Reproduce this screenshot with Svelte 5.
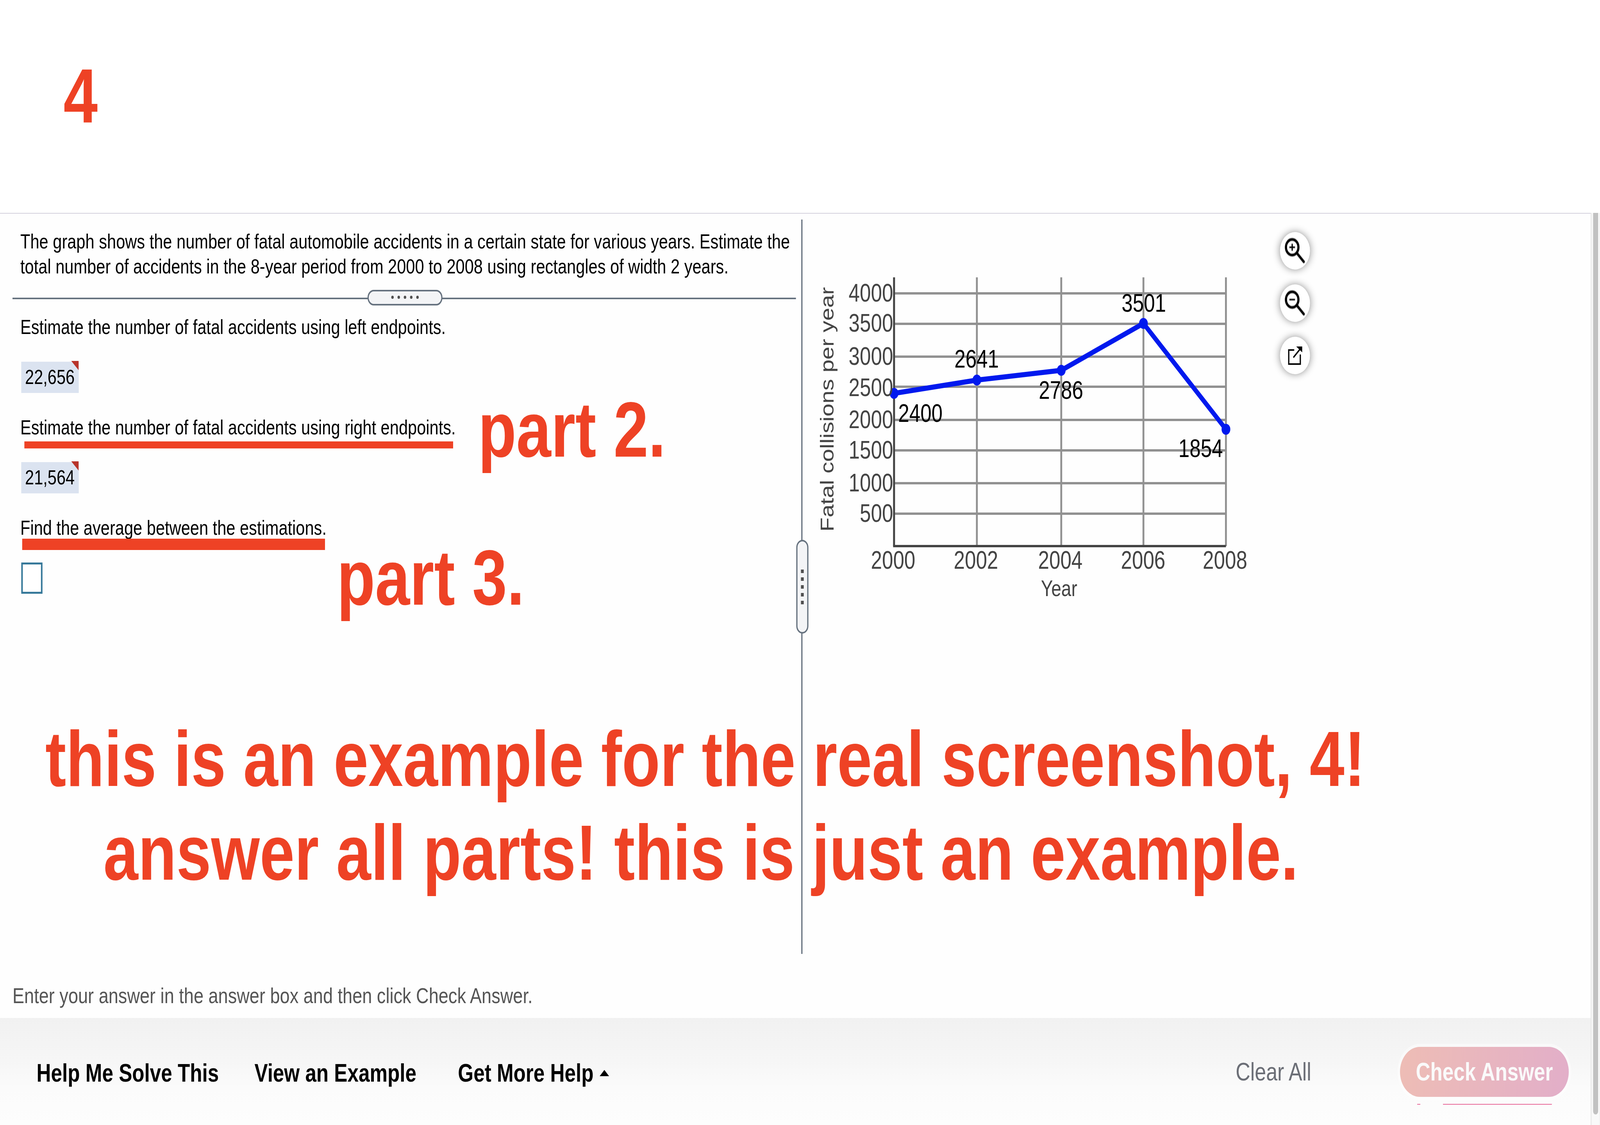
<script>
  const sx = (typeof window !== 'undefined' ? window.innerWidth : 5120) / 5120;
  const sy = (typeof window !== 'undefined' ? window.innerHeight : 2880) / 2880;
  const vx = [2861, 3126, 3396, 3659, 3923];
  const hy = [751, 829, 913, 990, 1075, 1153, 1237, 1315];
  const yLabels = [
    ['4000', 772], ['3500', 849], ['3000', 934], ['2500', 1014],
    ['2000', 1096], ['1500', 1174], ['1000', 1258], ['500', 1336]
  ];
  const xLabels = [['2000', 2858], ['2002', 3123], ['2004', 3393], ['2006', 3658], ['2008', 3920]];
  const pts = [[2861, 1007], [3126, 973], [3396, 948], [3659, 828], [3923, 1099]];
  const data = [['2400', 2874, 1080], ['2641', 3054, 941], ['2786', 3324, 1021], ['3501', 3589, 798], ['1854', 3771, 1170]];
  const line = pts.map((p) => p.join(',')).join(' ');
  const dots = [0, 1, 2, 3, 4];
</script>

<div class="window">
<div class="page" style="transform: scale({sx}, {sy})">
  <header class="top"><span class="qnum">4</span></header>

  <div class="body">
    <div class="column">
      <main class="work">
        <div class="question">
          <section class="left">
            <p class="text prompt">The graph shows the number of fatal automobile accidents in a certain state for various years. Estimate the total number of accidents in the 8-year period from 2000 to 2008 using rectangles of width 2 years.</p>
            <div class="hr">
              <div class="hhandle">
                {#each dots as d (d)}<i class="rdot"></i>{/each}
              </div>
            </div>
            <p class="text first">Estimate the number of fatal accidents using left endpoints.</p>
            <div class="chip">22,656</div>
            <p class="text">Estimate the number of fatal accidents using right endpoints.</p>
            <div class="chip">21,564</div>
            <p class="text">Find the average between the estimations.</p>
            <div class="box"></div>
          </section>

          <div class="split">
            <div class="vhandle">
              {#each dots as d (d)}<i class="sdot"></i>{/each}
            </div>
          </div>

          <section class="right">
            <svg class="chart" viewBox="2640 700 1456 860" width="1456" height="860">
              {#each hy as y (y)}<line class="grid" x1="2861" x2="3923" y1={y} y2={y} />{/each}
              {#each vx as x (x)}<line class="grid" x1={x} x2={x} y1="710" y2="1398" />{/each}
              <line class="axis" x1="2861" x2="2861" y1="710" y2="1398" />
              <line class="axis" x1="2858" x2="3923" y1="1398" y2="1398" />
              <polyline class="series" points={line} />
              {#each pts as p (p[0])}<circle class="pt" cx={p[0]} cy={p[1]} r="14" />{/each}
              {#each yLabels as l (l[0])}<text class="tick end" x="2858" y={l[1]}>{l[0]}</text>{/each}
              {#each xLabels as l (l[0])}<text class="tick mid" x={l[1]} y="1456">{l[0]}</text>{/each}
              {#each data as d (d[0])}<text class="val" x={d[1]} y={d[2]}>{d[0]}</text>{/each}
              <text class="xtitle" x="3389" y="1526">Year</text>
              <text class="ytitle" transform="rotate(-90 2668 1361)" x="2668" y="1361">Fatal collisions per year</text>
            </svg>
            <div class="tools">
              <button class="tool" aria-label="Zoom in">
                <svg viewBox="0 0 96 96" width="96" height="96">
                  <g class="soft">
                    <circle cx="39" cy="39" r="20" />
                    <line x1="54" y1="54" x2="76" y2="76" />
                    <line class="thin" x1="30" y1="39" x2="48" y2="39" />
                    <line class="thin" x1="39" y1="30" x2="39" y2="48" />
                  </g>
                </svg>
              </button>
              <button class="tool" aria-label="Zoom out">
                <svg viewBox="0 0 96 96" width="96" height="96">
                  <g class="soft">
                    <circle cx="39" cy="39" r="20" />
                    <line x1="54" y1="54" x2="76" y2="76" />
                    <line class="thin" x1="30" y1="39" x2="48" y2="39" />
                  </g>
                </svg>
              </button>
              <button class="tool" aria-label="Open in new window">
                <svg viewBox="0 0 96 96" width="96" height="96">
                  <path class="ext" d="M44 34H28V70H65V47" />
                  <path class="ext" d="M44 52L63 33" />
                  <path class="exth" d="M52 25H71V40Z" />
                </svg>
              </button>
            </div>
          </section>
        </div>
        <p class="instr">Enter your answer in the answer box and then click Check Answer.</p>
      </main>

      <footer class="foot">
        <a class="link">Help Me Solve This</a>
        <a class="link">View an Example</a>
        <a class="link more">Get More Help<i class="caret"></i></a>
        <span class="clear">Clear All</span>
        <button class="check">Check Answer</button>
        <i class="sliver"></i>
      </footer>
    </div>

    <aside class="scroll"><div class="thumb"></div></aside>
  </div>

  <div class="notes">
    <i class="bar bar1"></i>
    <i class="bar bar2"></i>
    <span class="note n2">part 2.</span>
    <span class="note n3">part 3.</span>
    <span class="note big1">this is an example for the real screenshot, 4!</span>
    <span class="note big2">answer all parts! this is just an example.</span>
  </div>
</div>
</div>

<style>
  :global(body) { margin: 0; background: #fff; overflow: hidden; }
  .window { width: 100vw; height: 100vh; overflow: hidden; }
  .page {
    position: relative; width: 5120px; height: 2880px; overflow: hidden; transform-origin: 0 0;
    display: flex; flex-direction: column; background: #fefefe;
    font-family: "Liberation Sans", Arial, sans-serif; color: #000;
  }
  .top { height: 545px; box-sizing: border-box; padding: 148px 0 0 203px; background: #fff; flex: none; }
  .qnum { display: block; font-size: 197px; line-height: 1; font-weight: 700; color: #ee4225; }
  .body { flex: 1; display: flex; min-height: 0; }
  .column { width: 5090px; display: flex; flex-direction: column; position: relative; }
  .work { flex: 1; border-top: 2px solid #d4d2de; box-sizing: border-box; padding-top: 15px; min-height: 0; }
  .question { display: flex; height: 1880px; }
  .left { width: 2564px; flex: none; box-sizing: border-box; padding: 24px 0 0 65px; }
  .text { margin: 56px 0 0; font-size: 52px; line-height: 64px; width: 2490px; }
  .prompt { margin-top: 0; }
  .first { margin-top: 39px; }
  .hr { position: relative; height: 4px; width: 2507px; margin: 48px 0 0 -25px; background: #66727f; }
  .hhandle {
    position: absolute; left: 1136px; top: -20px; width: 240px; height: 40px; box-sizing: border-box;
    background: #f3f4f6; border: 4px solid #66727f; border-radius: 20px;
    display: flex; justify-content: center; align-items: center; gap: 12px;
  }
  .rdot { width: 8px; height: 8px; border-radius: 50%; background: #4f4f4f; margin-top: -2px; }
  .chip {
    position: relative; box-sizing: border-box; width: 184px; height: 80px; margin: 57px 0 0 3px; padding-left: 12px;
    background: #dbe3f0; font-size: 52px; line-height: 79px;
  }
  .chip::after {
    content: ""; position: absolute; right: 0; top: -2px; width: 24px; height: 24px;
    background: #b8332a; clip-path: polygon(0 0, 100% 0, 100% 100%);
  }
  .box { box-sizing: border-box; width: 68px; height: 80px; margin: 57px 0 0 3px; border: 5px solid #37799a; background: #fff; }
  .split { position: relative; width: 4px; flex: none; background: #66727f; }
  .vhandle {
    position: absolute; left: -16px; top: 820px; width: 39px; height: 240px; box-sizing: border-box;
    background: #f3f4f6; border: 4px solid #66727f; border-radius: 20px;
    display: flex; flex-direction: column; align-items: center; justify-content: center; gap: 11px;
  }
  .sdot { width: 9px; height: 9px; background: #4f4f4f; }
  .right { flex: 1; display: flex; align-items: flex-start; padding-left: 72px; }
  .chart { display: block; margin-top: 138px; flex: none; overflow: visible; }
  .grid { stroke: #919191; stroke-width: 6; }
  .axis { stroke: #444; stroke-width: 6; }
  .series { fill: none; stroke: #0019ee; stroke-width: 13; stroke-linejoin: round; }
  .pt { fill: #0019ee; }
  .tick { font-size: 64px; fill: #444; }
  .end { text-anchor: end; }
  .mid { text-anchor: middle; }
  .val { font-size: 64px; fill: #000; }
  .xtitle { font-size: 57.6px; fill: #444; text-anchor: middle; }
  .ytitle { font-size: 59.6px; fill: #444; }
  .tools { display: flex; flex-direction: column; gap: 38px; margin-top: 32px; }
  .tool {
    width: 96px; height: 96px; padding: 0; border: 0; border-radius: 50%; background: #fff; display: block;
    box-shadow: 0 0 22px rgba(0, 0, 0, 0.45);
  }
  .tool svg { display: block; }
  .soft { fill: none; stroke: #000; stroke-width: 7; stroke-linecap: round; filter: blur(0.8px); }
  .soft .thin { stroke-width: 4; stroke-linecap: butt; }
  .ext { fill: none; stroke: #000; stroke-width: 4; stroke-linecap: round; }
  .exth { fill: #000; }
  .instr { margin: 75px 0 0 40px; font-size: 56.4px; line-height: 64px; color: #555; }
  .foot {
    position: relative; height: 274px; flex: none; box-sizing: border-box; padding: 0 70px 0 117px;
    display: flex; align-items: center; gap: 114px;
    background: linear-gradient(#f1f1f1, #f6f6f6 40%, #fbfbfb 65%, #fdfdfd);
  }
  .link { font-size: 64px; font-weight: 700; line-height: 80px; margin-top: 8px; display: flex; align-items: center; }
  .more { margin-left: 19px; }
  .caret { width: 0; height: 0; margin-left: 20px; border-left: 15px solid transparent; border-right: 15px solid transparent; border-bottom: 16px solid #000; }
  .clear { margin-left: auto; font-size: 65px; color: #6b6e76; margin-right: 170px; }
  .check {
    width: 540px; height: 128px; border: 0; border-radius: 64px; padding: 0; margin-top: 2px;
    background: linear-gradient(100deg, #eebdb5, #e2aec9); color: #fafafa;
    font: 700 64px "Liberation Sans", Arial, sans-serif;
    box-shadow: 0 0 0 8px rgba(255, 255, 255, 0.45);
  }
  .sliver {
    position: absolute; left: 4535px; top: 220px; width: 431px; height: 2px;
    background: linear-gradient(90deg, #e86a9a 10px, transparent 10px, transparent 83px, #e86a9a 83px);
  }
  .scroll { width: 30px; flex: none; box-sizing: border-box; background: #f9f9f9; border-left: 3px solid #e8e8e8; border-right: 2px solid #f0f0f0; }
  .thumb { width: 16px; height: 2308px; margin-left: 5px; background: #c1c1c1; border-radius: 0 0 8px 8px; }
  .notes { position: absolute; inset: 0; pointer-events: none; }
  .bar { position: absolute; background: #ee4225; }
  .bar1 { left: 78px; top: 1130px; width: 1372px; height: 18px; }
  .bar2 { left: 71px; top: 1379px; width: 969px; height: 29px; }
  .note { position: absolute; font-size: 200px; line-height: 1; font-weight: 700; color: #ee4225; white-space: nowrap; }
  .n2 { left: 1530px; top: 1000px; }
  .n3 { left: 1078px; top: 1379px; }
  .big1 { left: 145px; top: 1843px; }
  .big2 { left: 331px; top: 2083px; }
</style>
